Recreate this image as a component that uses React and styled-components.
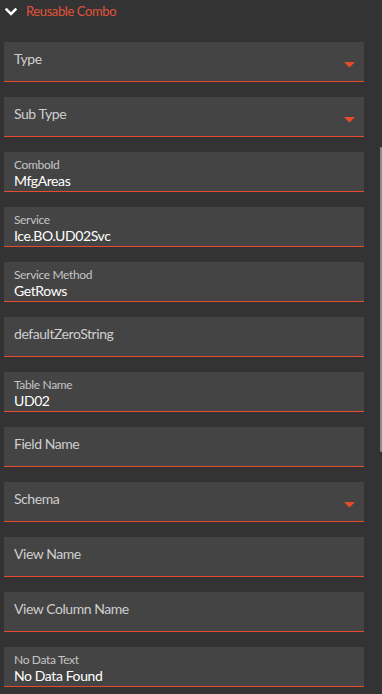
import React from "react";
import styled, { createGlobalStyle } from "styled-components";

const Global = createGlobalStyle`
  html, body { margin: 0; padding: 0; background: #333333; }
  body { font-family: "Lato", "Noto Sans", sans-serif; -webkit-font-smoothing: antialiased; }
  * { box-sizing: border-box; }
`;

const RED = "#e54b2c";

const Page = styled.div`
  display: flex;
  width: 382px;
  height: 694px;
  background: #333333;
  overflow: hidden;
`;

const Content = styled.div`
  flex: 1;
  display: flex;
  flex-direction: column;
  padding-left: 4px;
`;

const Track = styled.div`
  width: 3px;
  display: flex;
  flex-direction: column;
  align-items: flex-end;
`;

const Thumb = styled.div`
  width: 2px;
  height: 305px;
  margin-top: 147px;
  background: #8c8c8c;
  border-radius: 1px;
`;

const Header = styled.div`
  height: 42px;
  display: flex;
  align-items: flex-start;
  padding-left: 1px;
  padding-top: 3px;
  gap: 9px;
`;

const Chevron = styled.svg`
  margin-top: 5px;
  flex: none;
`;

const Title = styled.span`
  font-size: 13px;
  line-height: 16px;
  letter-spacing: -0.4px;
  color: #e0533a;
`;

const Fields = styled.div`
  display: flex;
  flex-direction: column;
  gap: 15px;
  width: 360px;
`;

const Field = styled.div`
  height: 40px;
  background: #444444;
  border-bottom: 1px solid ${RED};
  display: flex;
  padding: 0 9px 0 10px;
`;

const Text = styled.div`
  flex: 1;
  display: flex;
  flex-direction: column;
  min-width: 0;
`;

const Placeholder = styled.div`
  padding-top: 8px;
  font-size: 14px;
  line-height: 18px;
  letter-spacing: -0.45px;
  color: #cfcfcf;
`;

const Label = styled.div`
  padding-top: 6px;
  font-size: 12px;
  line-height: 14px;
  letter-spacing: -0.35px;
  color: #c4c4c4;
`;

const Value = styled.div`
  font-size: 14px;
  line-height: 17px;
  letter-spacing: -0.4px;
  color: #ffffff;
`;

const Caret = styled.svg`
  flex: none;
  margin-top: 20px;
`;

const fields = [
  { label: "Type", dropdown: true },
  { label: "Sub Type", dropdown: true },
  { label: "ComboId", value: "MfgAreas" },
  { label: "Service", value: "Ice.BO.UD02Svc" },
  { label: "Service Method", value: "GetRows" },
  { label: "defaultZeroString" },
  { label: "Table Name", value: "UD02" },
  { label: "Field Name" },
  { label: "Schema", dropdown: true },
  { label: "View Name" },
  { label: "View Column Name" },
  { label: "No Data Text", value: "No Data Found" },
];

export default function App() {
  return (
    <>
      <Global />
      <Page>
        <Content>
          <Header>
            <Chevron width="12" height="8" viewBox="0 0 12 8">
              <path d="M1.6 1.6 L6 6 L10.4 1.6" fill="none" stroke="#ffffff" strokeWidth="2.6" strokeLinecap="square" />
            </Chevron>
            <Title>Reusable Combo</Title>
          </Header>
          <Fields>
            {fields.map((f) => (
              <Field key={f.label}>
                <Text>
                  {f.value ? (
                    <>
                      <Label>{f.label}</Label>
                      <Value>{f.value}</Value>
                    </>
                  ) : (
                    <Placeholder>{f.label}</Placeholder>
                  )}
                </Text>
                {f.dropdown && (
                  <Caret width="11" height="6" viewBox="0 0 11 6">
                    <polygon points="0,0 11,0 5.5,5.5" fill={RED} />
                  </Caret>
                )}
              </Field>
            ))}
          </Fields>
        </Content>
        <Track>
          <Thumb />
        </Track>
      </Page>
    </>
  );
}
